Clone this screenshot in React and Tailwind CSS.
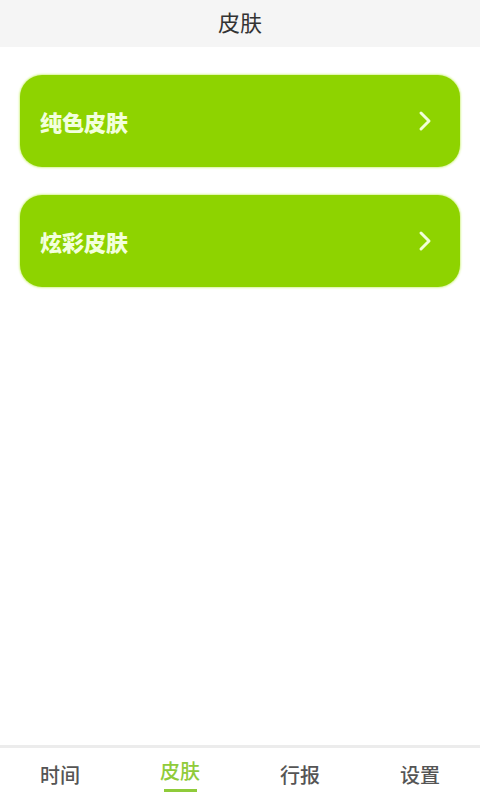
export default function App() {
  const font = { fontFamily: '"Noto Sans CJK SC", "Noto Sans", sans-serif' };
  const Chevron = () => (
    <svg width="14" height="22" viewBox="0 0 14 22" fill="none">
      <path d="M3 3 L11 11 L3 19" stroke="#f2ffd8" strokeWidth="3" strokeLinecap="round" strokeLinejoin="round" />
    </svg>
  );
  const Card = ({ label }) => (
    <div className="flex h-[92px] items-center justify-between rounded-[22px] bg-[#8ed300] pl-5 pr-7 shadow-[0_0_2px_1px_#d9f59a]">
      <span className="text-[22px] font-black leading-none text-[#f2ffdc]">{label}</span>
      <Chevron />
    </div>
  );
  const tabs = ["时间", "皮肤", "行报", "设置"];
  return (
    <div className="flex h-[800px] w-[480px] flex-col bg-white" style={font}>
      <div className="flex h-[47px] items-center justify-center bg-[#f5f5f5] pb-[6px]">
        <span className="text-[22px] leading-none text-[#333333]">皮肤</span>
      </div>
      <div className="flex flex-1 flex-col gap-7 px-5 pt-7">
        <Card label="纯色皮肤" />
        <Card label="炫彩皮肤" />
      </div>
      <div className="h-[3px] bg-[#ececec]" />
      <div className="grid h-[52px] grid-cols-4">
        {tabs.map((t, i) => (
          <div key={t} className="flex flex-col items-center pt-[17px]">
            <span
              className={
                "text-[20px] font-medium leading-none " +
                (i === 1 ? "text-[#8fcb3a] -mt-[4px]" : "text-[#555555]")
              }
            >
              {t}
            </span>
            {i === 1 && <div className="mt-[8px] h-[3px] w-[33px] bg-[#8fcb3a]" />}
          </div>
        ))}
      </div>
    </div>
  );
}
